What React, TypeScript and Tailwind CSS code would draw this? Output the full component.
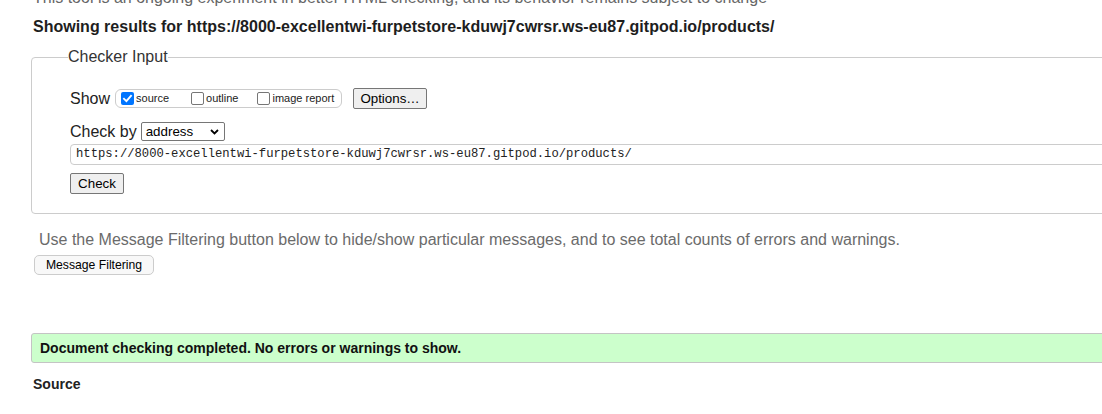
import React from "react";

function Box({ checked, label }: { checked?: boolean; label: string }) {
  return (
    <span className="flex items-center">
      {checked ? (
        <span className="flex h-[13px] w-[13px] items-center justify-center rounded-[2px] bg-[#0075ff]">
          <svg width="11" height="11" viewBox="0 0 11 11">
            <polyline points="2,5.8 4.4,8.2 9,2.8" fill="none" stroke="#fff" strokeWidth="1.9" strokeLinecap="square" />
          </svg>
        </span>
      ) : (
        <span className="h-[13px] w-[13px] rounded-[2px] border border-[#767676] bg-white" />
      )}
      <span className="ml-[2px] text-[11px] leading-[13px] text-[#222]">{label}</span>
    </span>
  );
}

export default function App() {
  return (
    <div
      className="h-[414px] w-[1102px] overflow-hidden bg-white text-[#222]"
      style={{ fontFamily: '"Liberation Sans", Arial, sans-serif' }}
    >
      <div className="-mt-[11px] ml-[33px] h-[18px] whitespace-nowrap text-[16px] leading-[18px] text-[#666]">
        This tool is an ongoing experiment in better HTML checking, and its behavior remains subject to change
      </div>
      <h2 className="ml-[33px] mt-[11px] whitespace-nowrap text-[16px] font-bold leading-[18px] text-[#1e1e1e]">
        Showing results for https://8000-excellentwi-furpetstore-kduwj7cwrsr.ws-eu87.gitpod.io/products/
      </h2>
      <fieldset className="ml-[31px] mt-[12px] w-[1100px] rounded-[4px] border border-[#cccccc] px-0 pb-[19px]">
        <legend className="ml-[36px] px-0 text-[16px] leading-[18px] text-[#333]">Checker Input</legend>
        <div className="flex flex-col pl-[38px] pt-[22px]">
          <div className="flex h-[21px] items-center">
            <span className="text-[16px] leading-[18px]">Show</span>
            <span className="ml-[5px] flex h-[19px] w-[227px] items-center gap-0 rounded-[6px] border border-[#cccccc] pl-[5px]">
              <Box checked label="source" />
              <span className="ml-[22px]">
                <Box label="outline" />
              </span>
              <span className="ml-[19px]">
                <Box label="image report" />
              </span>
            </span>
            <span className="ml-[11px] flex h-[21px] w-[74px] items-center justify-center rounded-[2px] border border-[#767676] bg-[#efefef] text-[13.33px] text-black">
              Options…
            </span>
          </div>
          <div className="mt-[13px] flex h-[19px] items-center">
            <span className="text-[16px] leading-[18px]">Check by</span>
            <span className="ml-[4px] flex h-[19px] w-[84px] items-center justify-between rounded-[2px] border border-[#767676] bg-white pl-[4px] pr-[5px] text-[13.33px] text-black">
              <span>address</span>
              <svg width="9" height="6" viewBox="0 0 9 6">
                <polyline points="1,1 4.5,4.5 8,1" fill="none" stroke="#000" strokeWidth="1.8" />
              </svg>
            </span>
          </div>
          <div
            className="mt-[3px] flex h-[21px] items-center rounded-[4px] border border-[#cccccc] pl-[5px] text-[12.2px] text-[#222]"
            style={{ fontFamily: '"Liberation Mono", "DejaVu Sans Mono", monospace' }}
          >
            https://8000-excellentwi-furpetstore-kduwj7cwrsr.ws-eu87.gitpod.io/products/
          </div>
          <div className="mt-[8px] flex">
            <span className="flex h-[21px] w-[54px] items-center justify-center rounded-[2px] border border-[#767676] bg-[#efefef] text-[13.33px] text-black">
              Check
            </span>
          </div>
        </div>
      </fieldset>
      <p className="ml-[39px] mt-[17px] whitespace-nowrap text-[16px] leading-[18px] text-[#6b6b6b]">
        Use the Message Filtering button below to hide/show particular messages, and to see total counts of errors and warnings.
      </p>
      <div className="ml-[34px] mt-[6px] flex">
        <span className="flex h-[20px] w-[120px] items-center justify-center rounded-[5px] border border-[#cccccc] bg-[#f8f8f8] text-[12.2px] text-black">
          Message Filtering
        </span>
      </div>
      <div className="ml-[31px] mt-[58px] flex h-[30px] w-[1100px] items-center rounded-[3px] border border-[#c4c4c4] bg-[#ccffcc] pl-[8px] text-[14px] font-bold text-[#111]">
        Document checking completed. No errors or warnings to show.
      </div>
      <h3 className="ml-[33px] mt-[12px] text-[14px] font-bold leading-[18px] text-[#222]">Source</h3>
    </div>
  );
}
